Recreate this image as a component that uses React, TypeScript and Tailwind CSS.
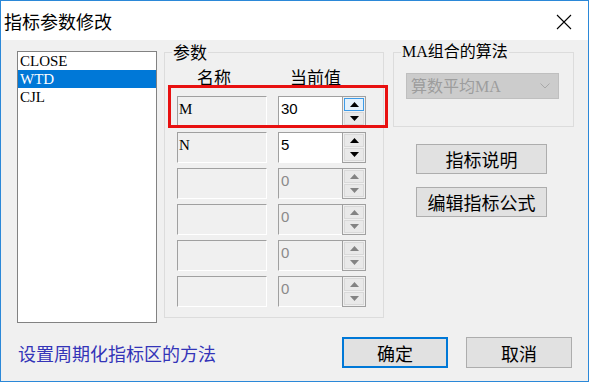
const cjk = "font-['Noto_Sans_CJK_SC',sans-serif]"

const Tri = ({ up, color }: { up?: boolean; color: string }) => (
  <svg width="9" height="5" viewBox="0 0 9 5">
    <polygon points={up ? "0,5 9,5 4.5,0" : "0,0 9,0 4.5,5"} fill={color} />
  </svg>
)

const Spin = ({ enabled, hot }: { enabled: boolean; hot?: boolean }) => {
  const c = enabled ? "#000" : "#838383"
  return (
    <div className="flex h-full w-[24px] flex-col gap-[1px] border border-[#a0a0a0] bg-[#f0f0f0] p-[1px]">
      <div className={hot ? "flex flex-1 items-center justify-center border border-[#3c9be8] bg-[#e5f1fb]" : "flex flex-1 items-center justify-center border border-[#d9d9d9] bg-[#e9e9e9]"}>
        <Tri up color={c} />
      </div>
      <div className="flex flex-1 items-center justify-center border border-[#d9d9d9] bg-[#e9e9e9]">
        <Tri color={c} />
      </div>
    </div>
  )
}

const ParamRow = ({ name, value, enabled, hot }: { name: string; value: string; enabled: boolean; hot?: boolean }) => (
  <div className="relative flex h-[31px] gap-[11px]">
    <div className="w-[90px] border border-[#a0a0a0] border-b-white border-r-white bg-[#f0f0f0] pl-[1px] pt-[2px] font-['Liberation_Serif',serif] text-[15px] leading-[20px] text-black">
      {name}
    </div>
    <div className="flex">
      <div className={enabled ? "w-[64px] border border-[#a0a0a0] border-b-white border-r-0 bg-white pl-[2px] pt-[3px] font-['Liberation_Sans',sans-serif] text-[15px] leading-[18px] text-black" : "w-[64px] border border-[#a0a0a0] border-b-white border-r-0 bg-[#f0f0f0] pl-[2px] pt-[3px] font-['Liberation_Sans',sans-serif] text-[15px] leading-[18px] text-[#8a8a8a]"}>
        {value}
      </div>
      <Spin enabled={enabled} hot={hot} />
    </div>
    {hot && <div className="absolute -top-[11px] -left-[9px] -right-[5px] -bottom-[1px] border-[3px] border-[#e81010]" />}
  </div>
)

const App = () => {
  return (
    <div className="flex h-[382px] w-[589px] flex-col border border-[#2b88d8] bg-[#f0f0f0]">
      <div className="flex h-[39px] items-center justify-between bg-white pl-[3px] pr-[16px]">
        <span className={`${cjk} text-[18px] leading-[20px] text-black`}>指标参数修改</span>
        <svg width="16" height="16" viewBox="0 0 16 16" className="mt-[3px]">
          <path d="M1 1 L15 15 M15 1 L1 15" stroke="#000" strokeWidth="1.1" fill="none" />
        </svg>
      </div>

      <div className="flex pl-[16px] pt-[3px]">
        <div className="mt-[8px] h-[272px] w-[140px] border border-[#828282] bg-white font-['Liberation_Serif',serif] text-[15px] leading-[18px]">
          <div className="h-[18px] pl-[2px] text-black">CLOSE</div>
          <div className="h-[18px] bg-[#0078d7] pl-[2px] text-white">WTD</div>
          <div className="h-[18px] pl-[2px] text-black">CJL</div>
        </div>

        <fieldset className="ml-[7px] h-[275px] w-[220px] border border-[#dcdcdc]">
          <legend className={`${cjk} ml-[7px] px-[1px] text-[17px] leading-[18px] text-black`}>参数</legend>
          <div className="pl-[12px]">
            <div className={`${cjk} mt-[6px] flex h-[20px] text-[17px] leading-[20px] text-black`}>
              <span className="w-[101px] pl-[20px]">名称</span>
              <span className="pl-[12px]">当前值</span>
            </div>
            <div className="mt-[9px] flex flex-col gap-[5px]">
              <ParamRow name="M" value="30" enabled hot />
              <ParamRow name="N" value="5" enabled />
              <ParamRow name="" value="0" enabled={false} />
              <ParamRow name="" value="0" enabled={false} />
              <ParamRow name="" value="0" enabled={false} />
              <ParamRow name="" value="0" enabled={false} />
            </div>
          </div>
        </fieldset>

        <div className="ml-[9px] flex w-[181px] flex-col">
          <fieldset className="h-[84px] border border-[#dcdcdc]">
            <legend className="ml-[7px] px-[1px] font-['Liberation_Serif','Noto_Sans_CJK_SC',serif] text-[16px] leading-[18px] text-black">MA组合的算法</legend>
            <div className="pl-[12px] pt-[12px]">
              <div className="flex h-[26px] w-[153px] items-center justify-between border border-[#bfbfbf] bg-[#cccccc] pl-[4px] pr-[8px]">
                <span className="font-['Noto_Sans_CJK_SC','Liberation_Serif',sans-serif] text-[16px] leading-[20px] text-[#9d9d9d]">
                  算数平均<span className="font-['Liberation_Serif',serif]">MA</span>
                </span>
                <svg width="10" height="6" viewBox="0 0 10 6">
                  <path d="M0.5 0.5 L5 5 L9.5 0.5" stroke="#a8a8a8" strokeWidth="1" fill="none" />
                </svg>
              </div>
            </div>
          </fieldset>
          <button className={`${cjk} ml-[23px] mt-[17px] h-[30px] w-[131px] border border-[#adadad] bg-[#e1e1e1] text-[18px] leading-[20px] text-black`}>指标说明</button>
          <button className={`${cjk} ml-[23px] mt-[13px] h-[30px] w-[131px] border border-[#adadad] bg-[#e1e1e1] text-[18px] leading-[20px] text-black`}>编辑指标公式</button>
        </div>
      </div>

      <div className="mt-[14px] flex h-[31px] items-center pl-[17px] pr-[16px]">
        <span className={`${cjk} flex-1 text-[18px] leading-[20px] text-[#3434b8]`}>设置周期化指标区的方法</span>
        <button className={`${cjk} h-[31px] w-[106px] border-2 border-[#0078d7] bg-[#e1e1e1] text-[18px] leading-[20px] text-black`}>确定</button>
        <button className={`${cjk} ml-[18px] h-[31px] w-[106px] border border-[#adadad] bg-[#e1e1e1] text-[18px] leading-[20px] text-black`}>取消</button>
      </div>
    </div>
  )
}

export default App
